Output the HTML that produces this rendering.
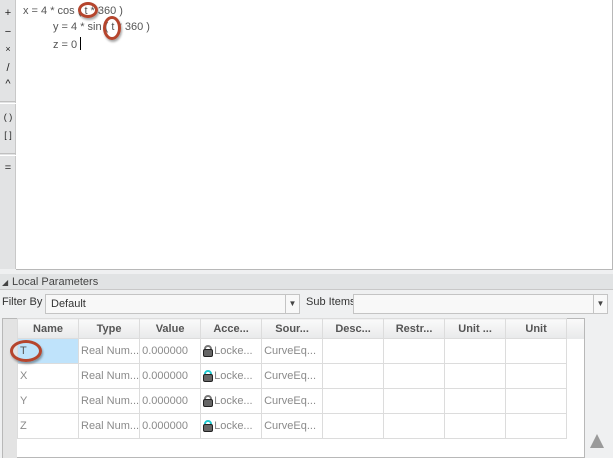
<!DOCTYPE html>
<html><head><style>
*{margin:0;padding:0;box-sizing:border-box}
body{width:613px;height:458px;background:#eff0f1;font-family:"Liberation Sans",sans-serif;position:relative;overflow:hidden;font-size:11px}
.a{position:absolute}
#tb{left:0;top:0;width:16px;height:269px;background:#e2e3e4;border-right:1px solid #c8c8c8}
#tb div{position:absolute;left:0;width:16px;text-align:center;font-size:11px;color:#222}
#ed{left:16px;top:0;width:597px;height:270px;background:#fff;border-right:1px solid #b8b8b8;border-bottom:1px solid #b8b8b8}
.eq{position:absolute;font-size:11px;color:#555}
.ring{position:absolute;border:3px solid #b5452d;border-radius:50%;box-shadow:1px 2px 2px rgba(0,0,0,.35)}
table{border-collapse:collapse;position:absolute;left:17px;top:318px}
td,th{width:61px;height:25px;border:1px solid #dcdcdc;font-size:11px;color:#8a8a8a;white-space:nowrap;overflow:hidden;padding-left:2px;text-align:left;font-weight:normal;background:#fff;vertical-align:middle;line-height:12px}
th{height:20px;background:linear-gradient(#fafafa,#e8e9ea);color:#555;font-weight:bold;text-align:center;padding:0}
.lk{display:inline-block;width:10px;height:12px;vertical-align:top;margin-right:1px;position:relative}
.lk i{position:absolute;left:0;top:4px;width:10px;height:8px;background:#666;border:1px solid #222;border-radius:2px}
.lk b{position:absolute;left:1px;top:0;width:8px;height:7px;border:2px solid #20c8d0;border-radius:4px 4px 0 0}
</style></head><body>
<div id="tb" class="a">
<div style="top:7px">+</div><div style="top:26px">−</div><div style="top:44px;font-size:9px">×</div><div style="top:62px">/</div><div style="top:78px">^</div>
<div style="top:101px;height:3px;border-top:1px solid #c0c0c0;border-bottom:1px solid #fff"></div>
<div style="top:112px;font-size:9px">( )</div><div style="top:130px;font-size:9px">[ ]</div>
<div style="top:153px;height:3px;border-top:1px solid #c0c0c0;border-bottom:1px solid #fff"></div>
<div style="top:162px">=</div>
</div>
<div id="ed" class="a">
<div class="eq" style="left:7px;top:5px">x = 4 * cos ( t * 360 )</div>
<div class="eq" style="left:37px;top:21px">y = 4 * sin ( t * 360 )</div>
<div class="eq" style="left:37px;top:37px">z = 0 <span style="display:inline-block;width:1px;height:13px;background:#000;vertical-align:-2px"></span></div>
<div class="ring" style="left:62px;top:2px;width:20px;height:16px"></div>
<div class="ring" style="left:87px;top:16px;width:18px;height:24px"></div>
</div>
<div class="a" style="left:0;top:274px;width:613px;height:16px;background:#e1e3e4;border-bottom:1px solid #c8c8c8"></div>
<div class="a" style="left:2px;top:278px;font-size:8px;color:#444">◢</div>
<div class="a" style="left:12px;top:276px;color:#444">Local Parameters</div>
<div class="a" style="left:2px;top:296px;color:#333">Filter By</div>
<div class="a" style="left:45px;top:294px;width:255px;height:20px;background:#f8f8f8;border:1px solid #c4c4c4;padding:3px 5px;color:#333">Default</div>
<div class="a" style="left:285px;top:295px;width:14px;height:18px;border-left:1px solid #c4c4c4;font-size:8px;color:#444;text-align:center;line-height:18px">▼</div>
<div class="a" style="left:306px;top:296px;color:#333">Sub Items</div>
<div class="a" style="left:353px;top:294px;width:255px;height:20px;background:#f8f8f8;border:1px solid #c4c4c4"></div>
<div class="a" style="left:593px;top:295px;width:14px;height:18px;border-left:1px solid #c4c4c4;font-size:8px;color:#444;text-align:center;line-height:18px">▼</div>
<div class="a" style="left:2px;top:318px;width:583px;height:140px;background:#fff;border:1px solid #b8b8b8"></div>
<div class="a" style="left:3px;top:319px;width:14px;height:139px;background:#e3e3e3"></div>
<div class="a" style="left:17px;top:319px;width:567px;height:20px;background:linear-gradient(#fafafa,#e8e9ea)"></div>
<table>
<tr><th>Name</th><th>Type</th><th>Value</th><th>Acce...</th><th>Sour...</th><th>Desc...</th><th>Restr...</th><th>Unit ...</th><th>Unit</th></tr>
<tr><td style="background:#bfe3fb;color:#555">T</td><td>Real Num...</td><td>0.000000</td><td><span class="lk"><b style="border-color:#777"></b><i></i></span>Locke...</td><td>CurveEq...</td><td></td><td></td><td></td><td></td></tr>
<tr><td>X</td><td>Real Num...</td><td>0.000000</td><td><span class="lk"><b></b><i></i></span>Locke...</td><td>CurveEq...</td><td></td><td></td><td></td><td></td></tr>
<tr><td>Y</td><td>Real Num...</td><td>0.000000</td><td><span class="lk"><b style="border-color:#777"></b><i></i></span>Locke...</td><td>CurveEq...</td><td></td><td></td><td></td><td></td></tr>
<tr><td>Z</td><td>Real Num...</td><td>0.000000</td><td><span class="lk"><b></b><i></i></span>Locke...</td><td>CurveEq...</td><td></td><td></td><td></td><td></td></tr>
</table>
<div class="ring" style="left:10px;top:340px;width:32px;height:22px"></div>
<div class="a" style="left:590px;top:434px;width:0;height:0;border-left:7px solid transparent;border-right:7px solid transparent;border-bottom:14px solid #9a9a9a"></div>
</body></html>
